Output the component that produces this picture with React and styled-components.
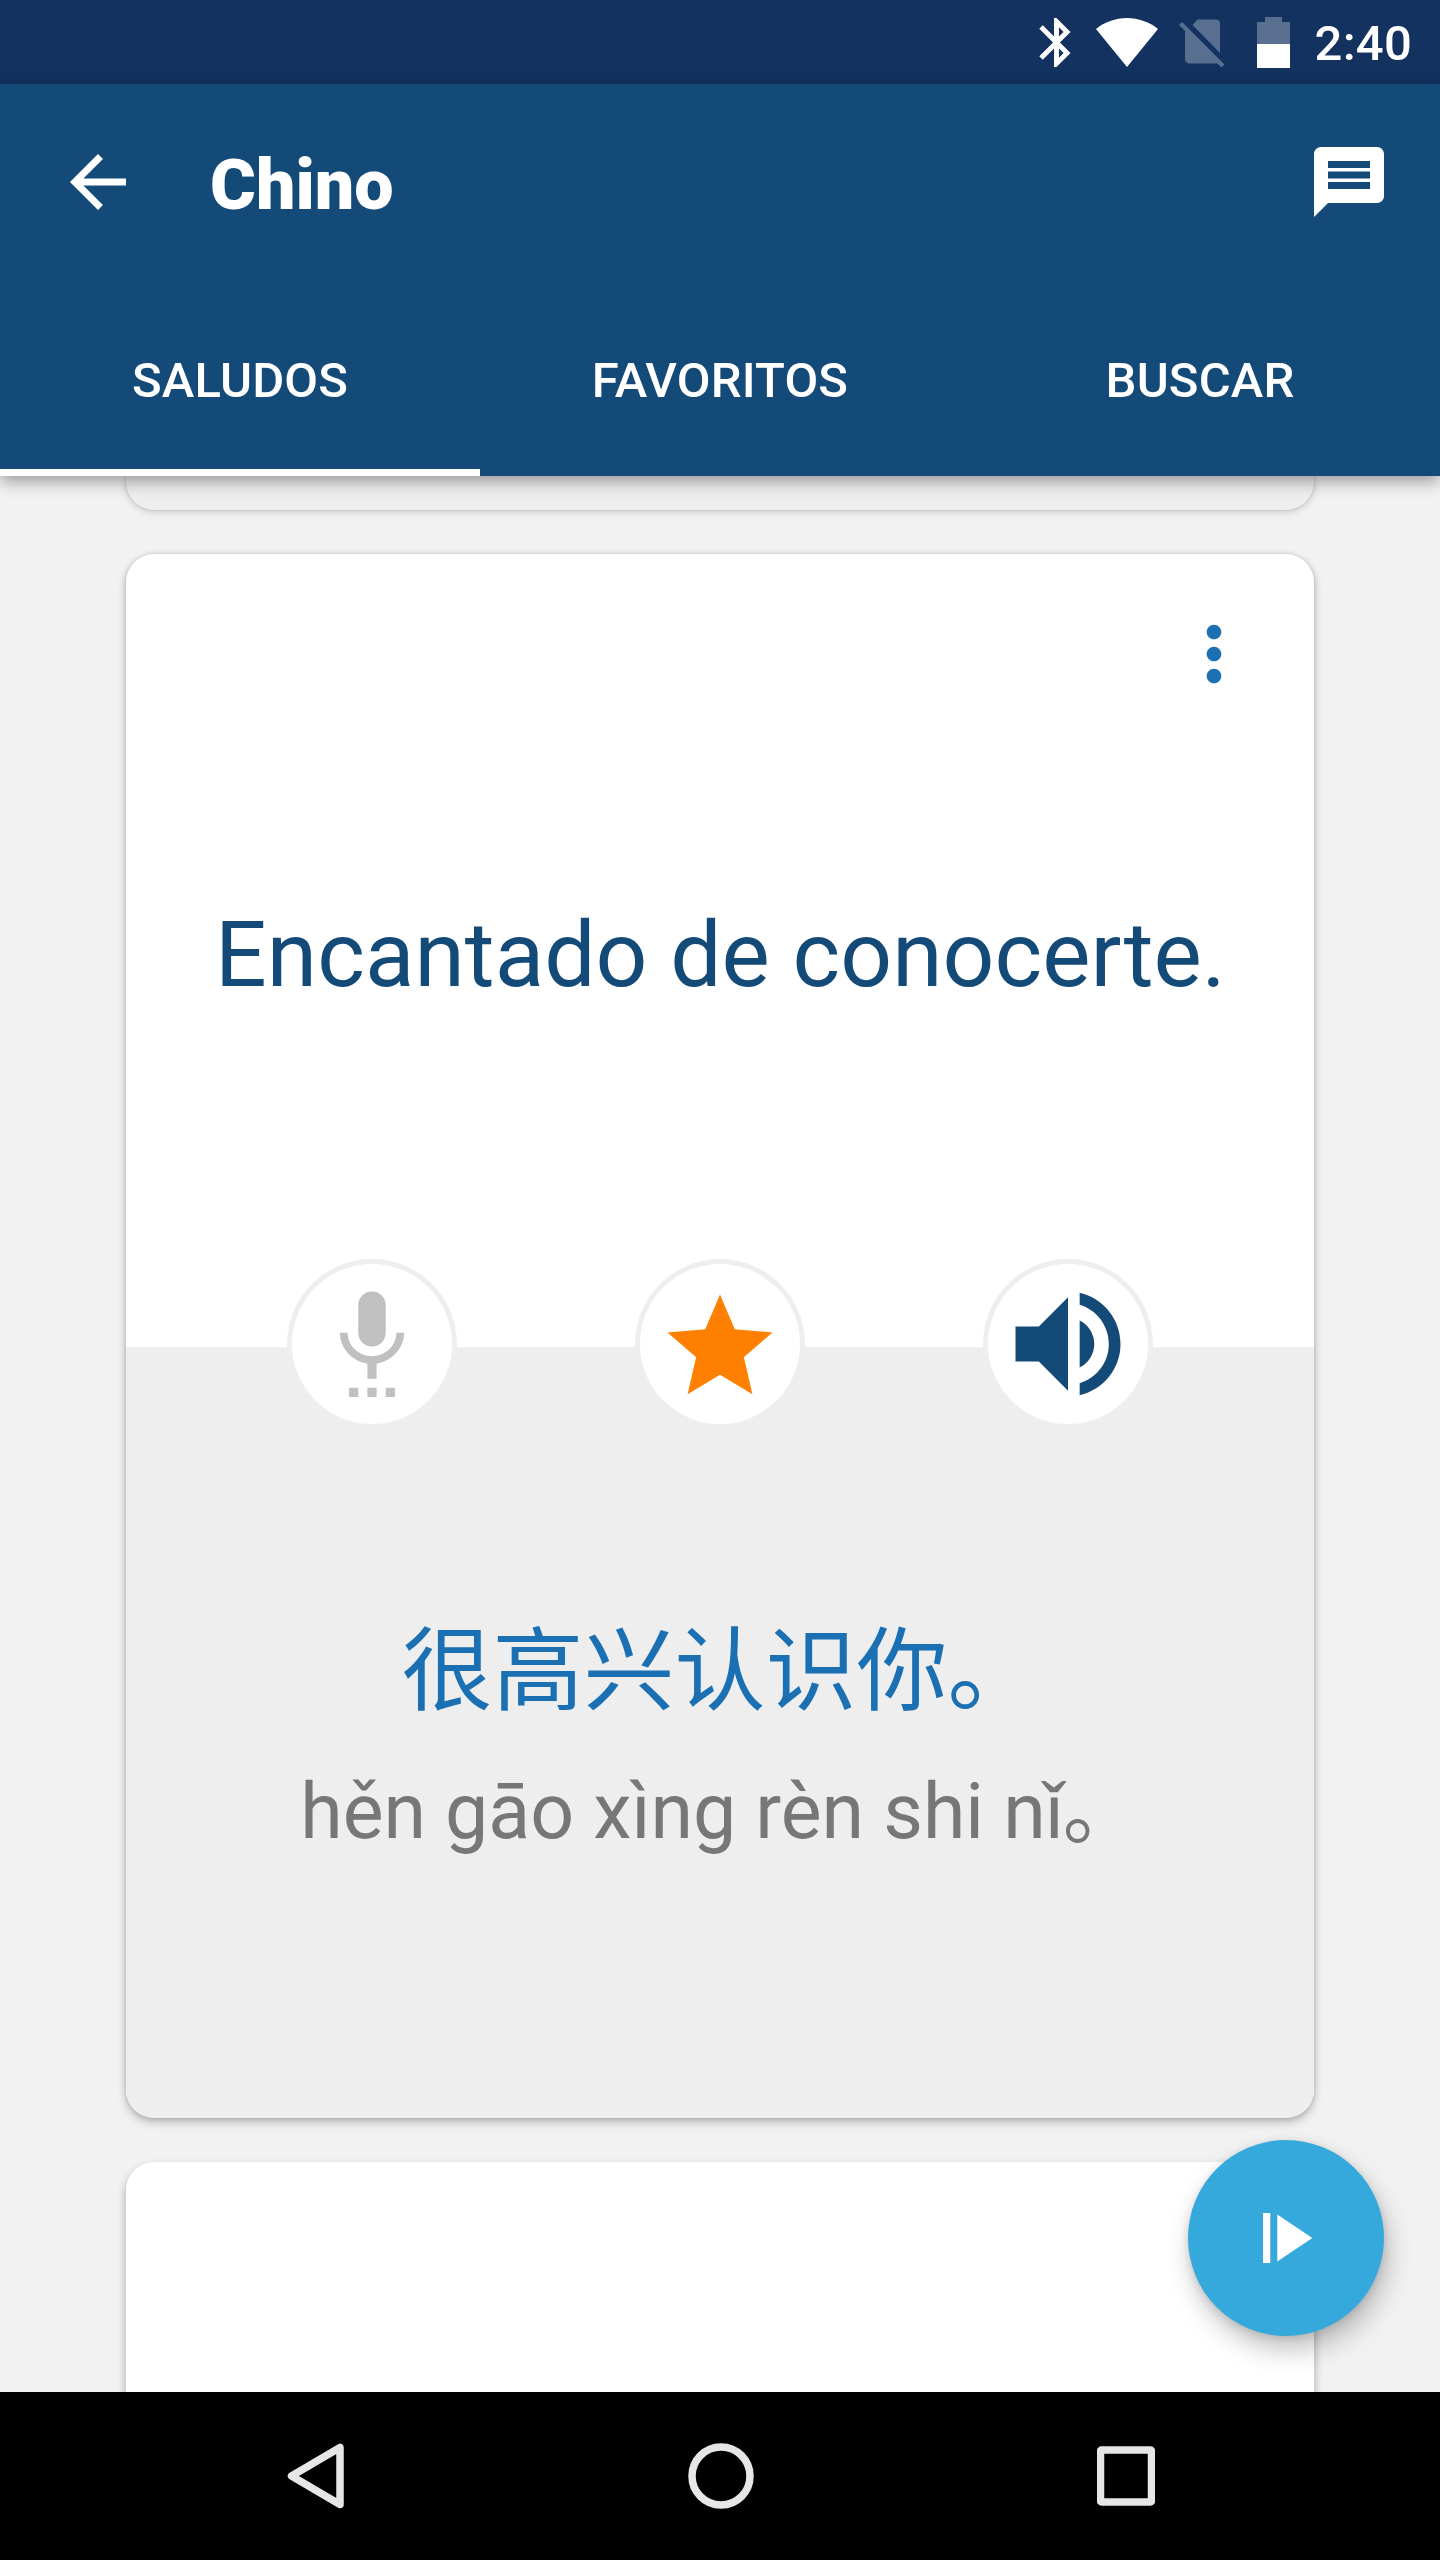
import React, { useState } from 'react';
import styled, { createGlobalStyle } from 'styled-components';
import {
  MdArrowBack, MdBluetooth, MdMessage, MdMoreVert, MdSettingsVoice, MdStar, MdVolumeUp
} from 'react-icons/md';

const tabs = ['Saludos', 'Favoritos', 'Buscar'];

const phrase = {
  source: 'Encantado de conocerte.',
  target: '很高兴认识你。',
  reading: 'hěn gāo xìng rèn shi nǐ。'
};

const WifiIcon = () => (
  <svg width="62" height="49" viewBox="0 0 62 49">
    <path d="M31 49L0 11C8.500 4 19.500 0 31 0s22.500 4 31 11z" fill="#fff" />
  </svg>
);

const NoSimIcon = () => (
  <svg width="46" height="49" viewBox="0 0 46 49">
    <path
      d="M18.500 0.500H37a4 4 0 0 1 4 4v29.500L13.500 6zM6 11.500L40.500 44.500H10.500a4.500 4.500 0 0 1-4.500-4.500z"
      fill="#596f8f"
    />
    <path d="M1.500 4.500L44 47" stroke="#596f8f" strokeWidth="4.200" />
  </svg>
);

const BatteryIcon = () => (
  <svg width="33" height="51" viewBox="0 0 33 51">
    <path d="M8 0h17v5h8v22H0V5h8z" fill="#596f8f" />
    <path d="M0 27h33v24H0z" fill="#fff" />
  </svg>
);

const PlayIcon = () => (
  <svg width="50" height="50" viewBox="0 0 50 50" fill="#fff">
    <path d="M0 0h7.300v50H0zM14.300 1.500L49.300 25l-35 23.500z" />
  </svg>
);

export default function App() {
  const [activeTab, setActiveTab] = useState(0);

  return (
    <Screen>
      <GlobalStyle />
      <StatusBar>
        <BluetoothIcon />
        <WifiIcon />
        <SimSlot><NoSimIcon /></SimSlot>
        <BatterySlot><BatteryIcon /></BatterySlot>
        <Clock>2:40</Clock>
      </StatusBar>

      <Header>
        <Toolbar>
          <IconButton aria-label="Volver"><MdArrowBack size={84} /></IconButton>
          <Title>Chino</Title>
          <IconButton aria-label="Mensajes"><MdMessage size={84} /></IconButton>
        </Toolbar>
        <TabBar>
          {tabs.map((tab, index) => (
            <Tab key={tab} $active={index === activeTab} onClick={() => setActiveTab(index)}>
              {tab}
            </Tab>
          ))}
        </TabBar>
      </Header>

      <CardList>
        <PreviousCard />
        <Card>
          <SourcePanel>
            <MenuButton aria-label="Más"><MdMoreVert size={88} /></MenuButton>
            <SourceText>{phrase.source}</SourceText>
          </SourcePanel>
          <Actions>
            <ActionButton $color="#c0c0c0" $shift="-5px" aria-label="Grabar"><MdSettingsVoice size={110} /></ActionButton>
            <ActionButton $color="#ff8000" $shift="5px" aria-label="Favorito"><MdStar size={126} /></ActionButton>
            <ActionButton $color="#144a78" $shift="0" aria-label="Escuchar"><MdVolumeUp size={140} /></ActionButton>
          </Actions>
          <TargetPanel>
            <TargetText lang="zh-CN">{phrase.target}</TargetText>
            <Reading>{phrase.reading}</Reading>
          </TargetPanel>
        </Card>
        <NextCard />
        <PlayButton aria-label="Reproducir"><PlayIcon /></PlayButton>
      </CardList>

      <NavBar>
        <svg width="57" height="66" viewBox="0 0 57 66">
          <path d="M4.500 33L53 4.500v57z" />
        </svg>
        <svg width="66" height="66" viewBox="0 0 66 66">
          <circle cx="33" cy="33" r="29" />
        </svg>
        <svg width="58" height="66" viewBox="0 0 58 66">
          <rect x="3.500" y="7" width="51" height="52" rx="1" />
        </svg>
      </NavBar>
    </Screen>
  )
}

const GlobalStyle = createGlobalStyle`
  * {
    box-sizing: border-box;
  }
  body {
    margin: 0;
    font-family: Roboto, "Noto Sans CJK SC", sans-serif;
  }
  button {
    padding: 0;
    border: 0;
    background: none;
    color: inherit;
    font: inherit;
  }
  svg {
    display: block;
    flex-shrink: 0;
  }
`;

const Screen = styled.div`
  display: flex;
  flex-direction: column;
  width: 1440px;
  height: 2560px;
  overflow: hidden;
  background: #f2f2f2;
`;

const StatusBar = styled.div`
  display: flex;
  align-items: center;
  justify-content: flex-end;
  height: 84px;
  padding-right: 28px;
  background: #133260;
  color: #fff;
`;

const BluetoothIcon = styled(MdBluetooth)`
  width: 59px;
  height: 59px;
  margin-right: 10px;
`;

const SimSlot = styled.div`
  margin: 2px 32px 0 21px;
`;

const BatterySlot = styled.div`
  margin-right: 25px;
`;

const Clock = styled.div`
  padding-top: 4px;
  font-size: 49px;
  font-weight: 500;
  line-height: 58px;
  letter-spacing: 0.25px;
`;

const Header = styled.header`
  position: relative;
  z-index: 2;
  height: 392px;
  background: #144a78;
  color: #fff;
  box-shadow: 0 5px 16px rgba(0, 0, 0, 0.38);
`;

const Toolbar = styled.div`
  display: flex;
  align-items: center;
  height: 196px;
  padding: 0 49px 0 56px;
`;

const IconButton = styled.button`
  flex-shrink: 0;
`;

const Title = styled.h1`
  flex: 1;
  margin: 0;
  padding: 6px 0 0 70px;
  font-size: 70px;
  font-weight: 900;
  line-height: 82px;
`;

const TabBar = styled.nav`
  display: grid;
  grid-template-columns: repeat(3, 1fr);
  height: 196px;
`;

const Tab = styled.button`
  padding-top: 12px;
  border-bottom: 7px solid ${props => props.$active ? '#fff' : 'transparent'};
  font-size: 49px;
  font-weight: 500;
  letter-spacing: 0.15px;
  text-transform: uppercase;
`;

const CardList = styled.main`
  position: relative;
  display: flex;
  flex-direction: column;
  gap: 44px;
  height: 1916px;
  padding: 0 126px;
  overflow: hidden;
`;

const Card = styled.article`
  flex-shrink: 0;
  height: 1564px;
  border-radius: 28px;
  background: #fff;
  box-shadow: 0 4px 10px rgba(0, 0, 0, 0.26), 0 0 4px rgba(0, 0, 0, 0.14);
`;

// only the lower edge is scrolled into view
const PreviousCard = styled(Card)`
  height: 34px;
  border-radius: 0 0 28px 28px;
  background: #eee;
  box-shadow: 0 2px 8px rgba(0, 0, 0, 0.16), 0 0 3px rgba(0, 0, 0, 0.14);
`;

const NextCard = styled(Card)`
  height: 793px;
  box-shadow: 0 5px 10px rgba(0, 0, 0, 0.32);
`;

const SourcePanel = styled.div`
  position: relative;
  display: flex;
  align-items: center;
  justify-content: center;
  height: 793px;
  padding-top: 9px;
`;

const MenuButton = styled.button`
  position: absolute;
  top: 56px;
  right: 56px;
  color: #1b70b3;
`;

const SourceText = styled.div`
  padding-left: 1px;
  color: #144a78;
  font-size: 91px;
  line-height: 110px;
  letter-spacing: 0.07px;
  white-space: nowrap;
`;

const Actions = styled.div`
  position: relative;
  z-index: 1;
  display: flex;
  justify-content: center;
  gap: 178px;
  margin: -88px 0 -82px;
`;

const ActionButton = styled.button`
  display: flex;
  align-items: center;
  justify-content: center;
  width: 170px;
  height: 170px;
  border: 5px solid #eee;
  border-radius: 50%;
  background: #fff;
  color: ${props => props.$color};

  svg {
    margin-top: ${props => props.$shift};
  }
`;

const TargetPanel = styled.div`
  display: flex;
  flex-direction: column;
  align-items: center;
  gap: 39px;
  height: 771px;
  padding-top: 261px;
  border-radius: 0 0 28px 28px;
  background: #eee;
`;

const TargetText = styled.div`
  color: #1b70b3;
  font-family: "Noto Sans CJK SC", sans-serif;
  font-size: 91px;
  line-height: 110px;
`;

const Reading = styled.div`
  color: #777;
  font-family: Roboto, "Liberation Sans", "Noto Sans CJK SC", sans-serif;
  font-size: 77px;
  line-height: 110px;
  white-space: nowrap;
`;

const PlayButton = styled.button`
  position: absolute;
  right: 56px;
  bottom: 56px;
  display: flex;
  align-items: center;
  padding-left: 75px;
  width: 196px;
  height: 196px;
  border-radius: 50%;
  background: #36a9dc;
  box-shadow: 4px 14px 26px rgba(0, 0, 0, 0.24), 0 2px 8px rgba(0, 0, 0, 0.12);
`;

const NavBar = styled.footer`
  display: flex;
  align-items: center;
  justify-content: space-between;
  height: 168px;
  padding: 0 285px 0 287px;
  background: #000;

  svg {
    fill: none;
    stroke: #e6e6e6;
    stroke-width: 7.500;
    stroke-linejoin: round;
  }
`;
